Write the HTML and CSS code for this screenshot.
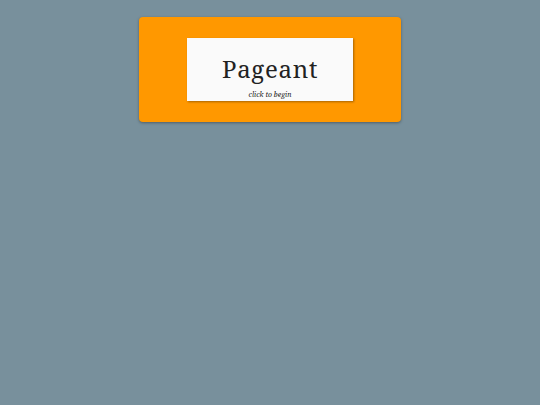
FILE: index.html
```html
<!DOCTYPE html>
<html>
<head>
<meta charset="utf-8">
<link rel="stylesheet" href="styles.css">
</head>
<body>
<div class="page">
  <div class="panel">
    <div class="card">
      <div class="title">Pageant</div>
      <div class="hint">click to begin</div>
    </div>
  </div>
</div>
</body>
</html>
```
FILE: styles.css
```css
html, body {
  margin: 0;
  padding: 0;
  background: #78909c;
  width: 540px;
  height: 405px;
  overflow: hidden;
}
.page {
  display: flex;
  justify-content: center;
  padding-top: 17px;
}
.panel {
  width: 262px;
  height: 105px;
  box-sizing: border-box;
  background: #ff9800;
  border-radius: 4px;
  box-shadow: 0 1px 3px rgba(0,0,0,0.35);
  display: flex;
  justify-content: center;
  padding-top: 21px;
}
.card {
  width: 166px;
  height: 63px;
  background: #fafafa;
  box-shadow: 1px 1px 2px rgba(0,0,0,0.35);
  display: flex;
  flex-direction: column;
  align-items: center;
  font-family: "Noto Serif", "DejaVu Serif", "Liberation Serif", serif;
  color: #222;
}
.title {
  font-size: 24px;
  letter-spacing: 0.7px;
  line-height: 30px;
  margin-top: 16px;
}
.hint {
  font-size: 7px;
  font-style: italic;
  line-height: 10px;
  margin-top: 6px;
}
```
